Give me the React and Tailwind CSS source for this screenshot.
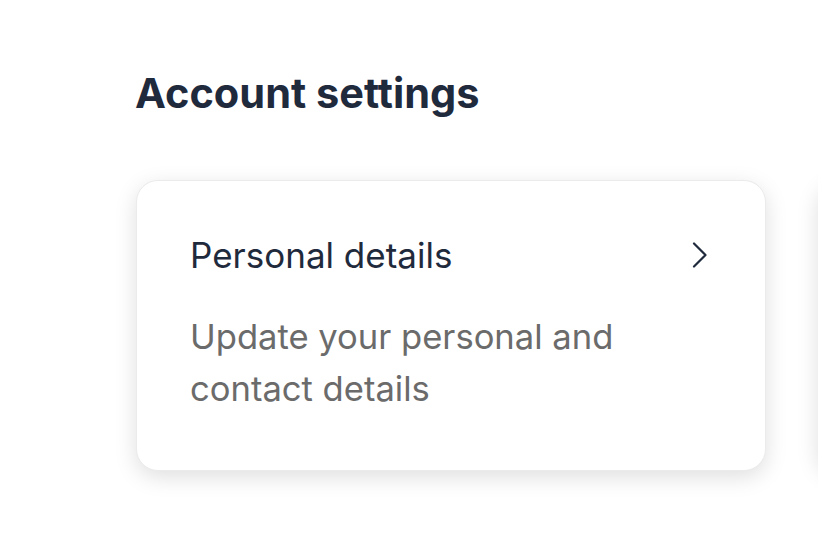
import React from "react";

function Chevron() {
  return (
    <svg width="16" height="26" viewBox="0 0 16 26" fill="none">
      <path d="M2 1.5 L13.5 13 L2 24.5" stroke="#1f2a3c" strokeWidth="2.2" strokeLinecap="round" strokeLinejoin="round" />
    </svg>
  );
}

function Card({ children }) {
  return (
    <div className="w-[630px] h-[291px] shrink-0 rounded-[22px] bg-white border border-[#ebebeb] shadow-[0_6px_22px_rgba(0,0,0,0.13)] pl-[53px] pr-[57px] pt-[51px] box-border">
      {children}
    </div>
  );
}

export default function App() {
  return (
    <div className="w-[818px] h-[552px] overflow-hidden bg-white" style={{ fontFamily: "Inter, 'Noto Sans', sans-serif" }}>
      <div className="pl-[135px] pt-[65px]">
        <h1 className="text-[41.5px] font-bold leading-[56px] text-[#1f2a3c] whitespace-nowrap">Account settings</h1>
        <div className="mt-[59px] flex gap-[52px] pl-[1px]">
          <Card>
            <div className="flex items-center justify-between h-[46px]">
              <span className="text-[35px] text-[#1f2a3c] whitespace-nowrap">Personal details</span>
              <Chevron />
            </div>
            <p className="mt-[32px] text-[34.6px] leading-[52px] text-[#6b6b6b] w-[480px]">
              Update your personal and contact details
            </p>
          </Card>
          <Card />
        </div>
      </div>
    </div>
  );
}
